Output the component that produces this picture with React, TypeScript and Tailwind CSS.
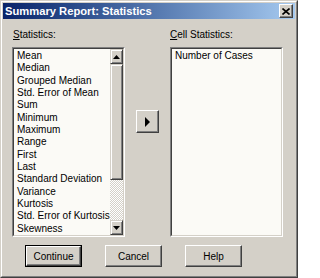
import React from "react";

const stats = [
  "Mean",
  "Median",
  "Grouped Median",
  "Std. Error of Mean",
  "Sum",
  "Minimum",
  "Maximum",
  "Range",
  "First",
  "Last",
  "Standard Deviation",
  "Variance",
  "Kurtosis",
  "Std. Error of Kurtosis",
  "Skewness",
];

function ScrollBtn({ dir }: { dir: "up" | "down" }) {
  return (
    <div className="h-[15px] w-full flex items-center justify-center bg-[#d4d0c8] border border-t-[#d4d0c8] border-l-[#d4d0c8] border-r-[#404040] border-b-[#404040] shadow-[inset_1px_1px_#ffffff,inset_-1px_-1px_#808080]">
      <svg width="7" height="4" viewBox="0 0 7 4">
        {dir === "up" ? (
          <polygon points="3.5,0 7,4 0,4" fill="#000" />
        ) : (
          <polygon points="0,0 7,0 3.5,4" fill="#000" />
        )}
      </svg>
    </div>
  );
}

function PushBtn({ label, def }: { label: string; def?: boolean }) {
  const inner = (
    <div className="flex-1 flex items-center justify-center bg-[#d4d0c8] border border-t-white border-l-white border-r-[#404040] border-b-[#404040] shadow-[inset_-1px_-1px_#808080]">
      <span>{label}</span>
    </div>
  );
  if (def) {
    return (
      <div className="w-[57px] h-[22px] flex border border-black">{inner}</div>
    );
  }
  return <div className="w-[57px] h-[22px] flex">{inner}</div>;
}

function Sunken({ children }: { children: React.ReactNode }) {
  return (
    <div className="w-[113px] h-[190px] flex border border-t-[#808080] border-l-[#808080] border-r-white border-b-white">
      <div className="flex-1 flex bg-[#fbfaf6] border border-t-[#404040] border-l-[#404040] border-r-[#d4d0c8] border-b-[#d4d0c8] overflow-hidden">
        {children}
      </div>
    </div>
  );
}

export default function App() {
  return (
    <div className="w-[298px] h-[278px] bg-[#d4d0c8] border border-t-[#d4d0c8] border-l-[#d4d0c8] border-r-[#404040] border-b-[#404040] font-['Liberation_Sans',Arial,sans-serif] text-[10px] text-black">
      <div className="h-full flex flex-col border border-t-white border-l-white border-r-[#808080] border-b-[#808080] p-px">
        <div className="h-[16px] flex items-center justify-between bg-gradient-to-r from-[#0a246a] to-[#a6caf0] pl-[2px] pr-[2px]">
          <span className="text-white font-bold text-[11.2px] leading-[16px]">
            Summary Report: Statistics
          </span>
          <div className="w-[14px] h-[14px] flex items-center justify-center bg-[#d4d0c8] border border-t-white border-l-white border-r-[#404040] border-b-[#404040] shadow-[inset_-1px_-1px_#808080]">
            <svg width="8" height="7" viewBox="0 0 8 7">
              <path d="M0.5 0.5 L7.5 6.5 M7.5 0.5 L0.5 6.5" stroke="#000" strokeWidth="1.6" />
            </svg>
          </div>
        </div>

        <div className="flex-1 flex flex-col pl-[9px] pt-[10px]">
          <div className="flex">
            <div className="flex flex-col w-[113px]">
              <div className="h-[12px] leading-[12px] mb-[6px] pl-px">
                <span className="underline underline-offset-[1px]">S</span>tatistics:
              </div>
              <Sunken>
                <div className="flex-1 pl-[3px] pt-[1px]">
                  {stats.map((s) => (
                    <div key={s} className="leading-[12.33px] h-[12.33px] whitespace-nowrap">
                      {s}
                    </div>
                  ))}
                </div>
                <div className="w-[15px] flex flex-col">
                  <ScrollBtn dir="up" />
                  <div className="h-[116px] bg-[#d4d0c8] border border-t-[#d4d0c8] border-l-[#d4d0c8] border-r-[#404040] border-b-[#404040] shadow-[inset_1px_1px_#ffffff,inset_-1px_-1px_#808080]" />
                  <div className="flex-1 bg-[repeating-conic-gradient(#d4d0c8_0%_25%,#ffffff_0%_50%)] bg-[length:2px_2px]" />
                  <ScrollBtn dir="down" />
                </div>
              </Sunken>
            </div>

            <div className="w-[45px] flex flex-col items-center pt-[81px]">
              <div className="w-[23px] h-[23px] flex items-center justify-center bg-[#d4d0c8] border border-t-white border-l-white border-r-[#404040] border-b-[#404040] shadow-[inset_-1px_-1px_#808080]">
                <svg width="5" height="10" viewBox="0 0 5 10">
                  <polygon points="0,0 5,5 0,10" fill="#000" />
                </svg>
              </div>
            </div>

            <div className="flex flex-col w-[113px]">
              <div className="h-[12px] leading-[12px] mb-[6px]">
                <span className="underline underline-offset-[1px]">C</span>ell Statistics:
              </div>
              <Sunken>
                <div className="flex-1 pl-[3px] pt-[1px]">
                  <div className="leading-[12.33px] whitespace-nowrap">Number of Cases</div>
                </div>
              </Sunken>
            </div>
          </div>

          <div className="flex gap-[23px] pl-[13px] mt-[8px]">
            <PushBtn label="Continue" def />
            <PushBtn label="Cancel" />
            <PushBtn label="Help" />
          </div>
        </div>
      </div>
    </div>
  );
}
